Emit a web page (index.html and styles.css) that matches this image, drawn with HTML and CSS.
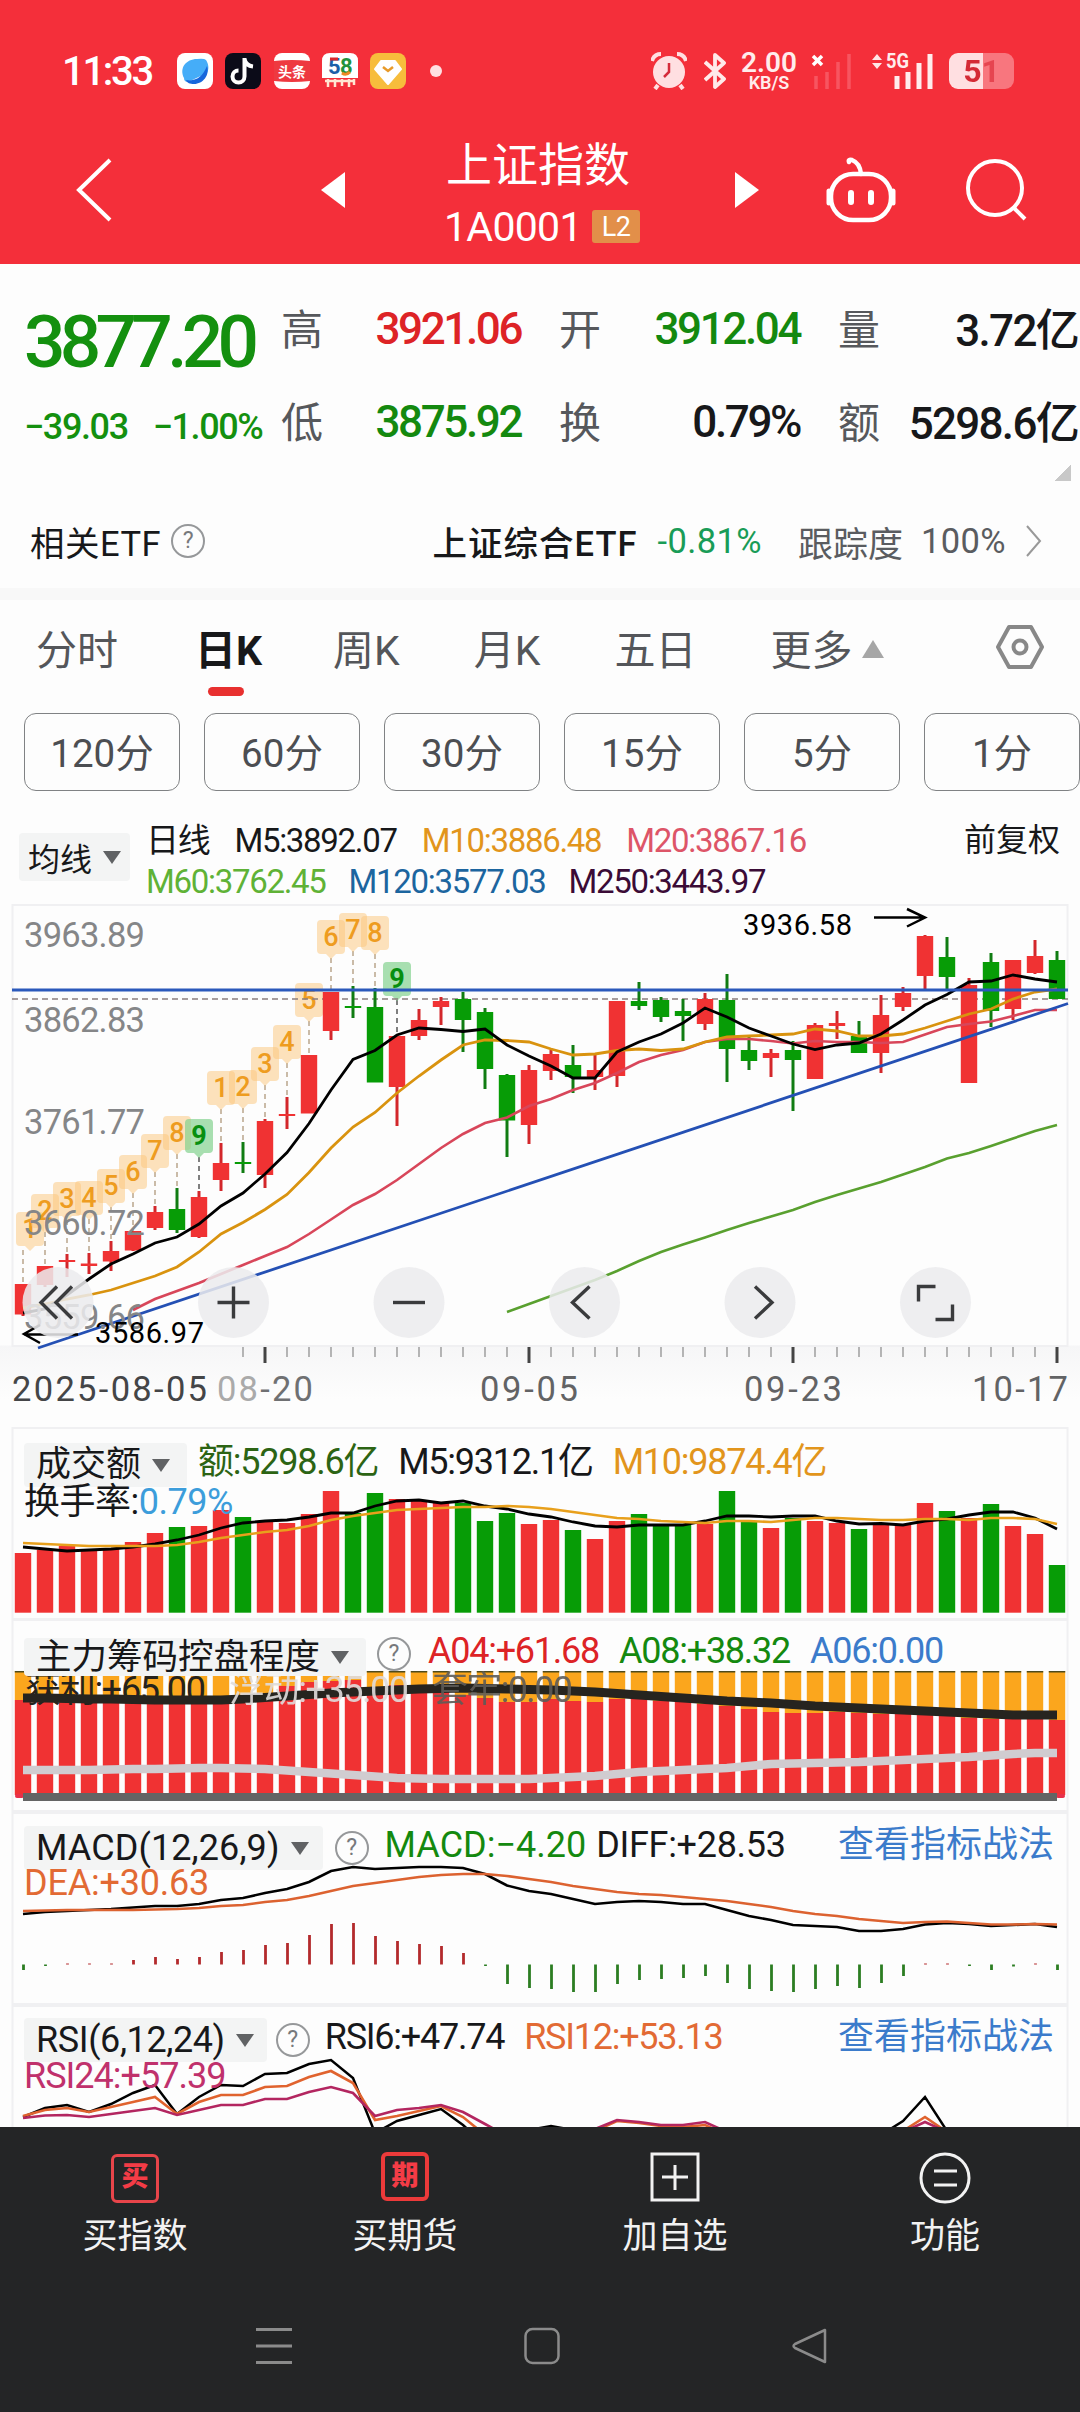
FILE: index.html
```html
<!DOCTYPE html>
<html lang="zh-CN">
<head>
  <meta charset="UTF-8">
  <meta name="viewport" content="width=device-width, initial-scale=1.0">
  <title>上证指数</title>
  <link rel="stylesheet" href="styles.css">
</head>
<body>
  <header>
    <div class="status">
      <span class="time">11:33</span>
      <div class="apps">
        <svg width="36" height="36" viewBox="0 0 36 36"><rect width="36" height="36" rx="8" fill="#fff"/><path d="M7 25C2 15 9 6 20 6q7-1 9 1c3 5 3 9 1 13L11 29q-4 0-4-4z" fill="#45adf8"/><path d="M30 13c3 9-4 18-13 18-4 0-7-1-8-4 10 2 17-4 21-14z" fill="#1766dc"/></svg>
        <svg width="36" height="36" viewBox="0 0 36 36"><rect width="36" height="36" rx="8" fill="#0b0b18"/><path d="M19.500 5v18.500a6 6 0 1 1-6-6M19.500 6c1 5 4 7 8.500 7.500" fill="none" stroke="#fff" stroke-width="4"/></svg>
        <svg width="36" height="36" viewBox="0 0 36 36"><rect width="36" height="36" rx="8" fill="#fff"/><path d="M0 8q18-2 36 0v20q-18 2-36 0z" fill="#ee3940"/><text x="18" y="24" text-anchor="middle" font-size="14" font-weight="700" fill="#fff">头条</text></svg>
        <svg width="36" height="36" viewBox="0 0 36 36"><path d="M8 0h20q8 0 8 8v17H0V8q0-8 8-8z" fill="#fff"/><text x="6" y="21" font-size="22" font-weight="700" fill="#1c5fa8">5</text><text x="18" y="21" font-size="22" font-weight="700" fill="#22923c">8</text><path d="M8 6h8" stroke="#d8282c" stroke-width="3"/><path d="M20 20q4 3 8-1" stroke="#ee8a22" stroke-width="3" fill="none"/><path d="M3 28h29M6 26v8M13 26v8M20 26v7M27 26v8M32 26v6" stroke="#ffe6d2" stroke-width="2.500"/></svg>
        <svg width="36" height="36" viewBox="0 0 36 36"><rect width="36" height="36" rx="8" fill="#f7bd3c"/><path d="M11 8h14l6 8-13 15L5 16z" fill="#fff" stroke="#fff" stroke-linejoin="round" stroke-width="2"/><path d="M13 14l5 4 5-4" fill="none" stroke="#e89a2a" stroke-width="2.500"/></svg>
      </div>
      <i class="dot"></i>
      <div class="sys">
        <svg width="36" height="38" viewBox="0 0 36 38"><circle cx="18" cy="20" r="16" fill="#ffdfe1"/><path d="M1 9Q3 2 10 2M35 9Q33 2 26 2M7 33l-3 4M29 33l3 4" stroke="#ffdfe1" stroke-width="4" fill="none"/><path d="M18 11v9l-5 5" stroke="#d52b3a" stroke-width="2.500" fill="none"/></svg>
        <svg class="bt" width="22" height="38" viewBox="0 0 22 38"><path d="M1 10l19 17-9 8V3l9 8L1 28" stroke="#ffeaea" stroke-width="3.800" fill="none" stroke-linejoin="round"/></svg>
        <div class="speed"><b>2.00</b><span>KB/S</span></div>
        <svg class="sig" width="42" height="38" viewBox="0 0 42 38"><path d="M2 4l9 9M11 4l-9 9" stroke="#fff" stroke-width="3.500"/><path d="M5 24v13M16 20v17M27 10v27M38 2v35" stroke="#f75560" stroke-width="3.500"/></svg>
        <svg class="sig5" width="62" height="38" viewBox="0 0 62 38"><path d="M0 8l5-6 5 6zM0 11l5 6 5-6z" fill="#ffe6e6"/><text x="14" y="16" font-size="20" font-weight="700" textLength="23" lengthAdjust="spacingAndGlyphs" fill="#ffecec">5G</text><path d="M25 24v13M36 20v17M47 11v26M58 2v35" stroke="#ffecec" stroke-width="5"/></svg>
        <div class="battery"><span>51</span></div>
      </div>
    </div>
    <div class="titlebar">
      <svg class="back" width="36" height="64" viewBox="0 0 36 64"><path d="M34 2L3 32l31 30" fill="none" stroke="#fff" stroke-width="4"/></svg>
      <svg class="prev" width="24" height="36" viewBox="0 0 24 36"><path d="M24 0v36L0 18z" fill="#fff"/></svg>
      <div class="title">
        <h1>上证指数</h1>
        <div class="code">1A0001 <span>L2</span></div>
      </div>
      <svg class="next" width="24" height="36" viewBox="0 0 24 36"><path d="M0 0v36l24-18z" fill="#fff"/></svg>
      <svg class="robot" width="70" height="66" viewBox="0 0 70 66"><path d="M23 5q-1-3 3-2q8 3 9 14" fill="none" stroke="#fff" stroke-width="4.500" stroke-linecap="round"/><rect x="5" y="17" width="60" height="46" rx="22" fill="none" stroke="#fff" stroke-width="4.500"/><path d="M3 34v12M67 34v12" stroke="#fff" stroke-width="5" stroke-linecap="round"/><path d="M25 36v9M45 36v9" stroke="#fff" stroke-width="6" stroke-linecap="round"/></svg>
      <svg class="search" width="62" height="62" viewBox="0 0 62 62"><circle cx="29" cy="29" r="27" fill="none" stroke="#fff" stroke-width="4"/><path d="M48 49l11 11" stroke="#fff" stroke-width="4"/></svg>
    </div>
  </header>

  <section class="quote">
    <div class="price">
      <strong>3877.20</strong>
      <div><span>−39.03</span><span>−1.00%</span></div>
    </div>
    <div class="stats">
      <label>高</label><b class="red">3921.06</b>
      <label>开</label><b class="green">3912.04</b>
      <label>量</label><b class="amount">3.72亿</b>
      <label>低</label><b class="green">3875.92</b>
      <label>换</label><b>0.79%</b>
      <label>额</label><b class="amount">5298.6亿</b>
    </div>
    <i class="corner"></i>
  </section>

  <section class="etf">
    <span class="related">相关ETF</span><i class="help">?</i>
    <b>上证综合ETF</b><em>-0.81%</em><span class="track">跟踪度</span><span class="pct">100%</span>
    <svg width="17" height="32" viewBox="0 0 17 32"><path d="M2 1l13 15L2 31" fill="none" stroke="#999" stroke-width="2"/></svg>
  </section>

  <nav class="tabs">
    <a>分时</a><a class="active">日K</a><a>周K</a><a>月K</a><a>五日</a><a>更多<i></i></a>
    <svg width="50" height="46" viewBox="0 0 50 46"><path d="M14 3h22l11 20-11 20H14L3 23z" fill="none" stroke="#888" stroke-width="4" stroke-linejoin="round"/><circle cx="25" cy="23" r="6.500" fill="none" stroke="#888" stroke-width="4"/></svg>
  </nav>
  <div class="pills">
    <a>120分</a><a>60分</a><a>30分</a><a>15分</a><a>5分</a><a>1分</a>
  </div>

  <section class="ma">
    <span class="picker">均线<i class="down"></i></span>
    <div class="ma-lines">
      <div><span>日线</span><span>M5:3892.07</span><span class="orange">M10:3886.48</span><span class="pink">M20:3867.16</span></div>
      <div><span class="lime">M60:3762.45</span><span class="blue">M120:3577.03</span><span class="plum">M250:3443.97</span></div>
    </div>
    <span class="adjust">前复权</span>
  </section>

  <section class="kline">
    <svg id="kline" width="1080" height="520" viewBox="0 0 1080 520"></svg>
  </section>

  <section class="panel volume">
    <svg id="volume" width="1080" height="192" viewBox="0 7 1080 192"></svg>
    <div class="legend">
      <span class="picker">成交额<i class="down"></i></span>
      <span class="dgreen">额:5298.6亿</span><span>M5:9312.1亿</span><span class="orange">M10:9874.4亿</span>
    </div>
    <div class="sub">换手率:<span class="sky">0.79%</span></div>
  </section>

  <section class="panel chips">
    <svg id="chips" width="1080" height="193" viewBox="0 199 1080 193"></svg>
    <div class="legend">
      <span class="picker">主力筹码控盘程度<i class="down"></i></span><i class="help">?</i>
      <span class="red">A04:+61.68</span><span class="green">A08:+38.32</span><span class="link">A06:0.00</span>
    </div>
  </section>

  <section class="panel macd">
    <svg id="macd" width="1080" height="193" viewBox="0 12 1080 193"></svg>
    <div class="legend">
      <span class="picker">MACD(12,26,9)<i class="down"></i></span><i class="help">?</i>
      <span class="green">MACD:−4.20</span><span class="diff">DIFF:+28.53</span><a class="link">查看指标战法</a>
    </div>
    <div class="sub coral">DEA:+30.63</div>
  </section>

  <section class="panel rsi">
    <svg id="rsi" width="1080" height="122" viewBox="0 205 1080 122"></svg>
    <div class="legend">
      <span class="picker">RSI(6,12,24)<i class="down"></i></span><i class="help">?</i>
      <span>RSI6:+47.74</span><span class="coral">RSI12:+53.13</span><a class="link">查看指标战法</a>
    </div>
    <div class="sub magenta">RSI24:+57.39</div>
  </section>

  <footer>
    <div class="actions">
      <a><i class="box">买</i>买指数</a>
      <a><i class="box thick">期</i>买期货</a>
      <a><svg width="50" height="50" viewBox="0 0 50 50"><path d="M2 2h46v46H2zM25 13v25M12 25h26" fill="none" stroke="#f2f2f2" stroke-width="3"/></svg>加自选</a>
      <a><svg width="52" height="52" viewBox="0 0 52 52"><circle cx="26" cy="26" r="24" fill="none" stroke="#f2f2f2" stroke-width="3"/><path d="M15 19h23M15 33h23" stroke="#f2f2f2" stroke-width="3"/></svg>功能</a>
    </div>
    <div class="sysnav">
      <svg width="36" height="38" viewBox="0 0 36 38"><path d="M0 2.500h36M0 19h36M0 35.500h36" stroke="#8b8b8b" stroke-width="3"/></svg>
      <svg width="36" height="38" viewBox="0 0 36 38"><rect x="1.500" y="2" width="33" height="34" rx="7" fill="none" stroke="#8b8b8b" stroke-width="2.500"/></svg>
      <svg width="36" height="38" viewBox="0 0 36 38"><path d="M33 3v32L3 21q-3-2 0-4z" fill="none" stroke="#8b8b8b" stroke-width="2.500" stroke-linejoin="round"/></svg>
    </div>
  </footer>
  <script src="chart.js"></script>
</body>
</html>
```
FILE: styles.css
```css
* {
  box-sizing: border-box;
}

body {
  margin: 0;
  width: 1080px;
  height: 2412px;
  overflow: hidden;
  background: #fdfdfd;
  color: #17181a;
  font-family: Roboto, "Noto Sans CJK SC", sans-serif;
}

svg {
  display: block;
  flex: none;
}

i, em {
  font-style: normal;
}

.red { color: #dd2326; }
.green { color: #14890f; }
.dgreen { color: #2c6414; }
.orange { color: #e2951c; }
.pink { color: #dd5568; }
.lime { color: #5fb236; }
.blue { color: #1c659f; }
.plum { color: #3b0b36; }
.sky { color: #3c9ddb; }
.coral { color: #e26a34; }
.magenta { color: #c0316c; }
.link { color: #3b7bcb; }

/* red header */
header {
  height: 264px;
  background: #f42f3a;
  color: #fff;
}

.status {
  display: flex;
  align-items: center;
  height: 142px;
  padding: 0 66px 0 62px;
}

.time {
  width: 115px;
  font-size: 40px;
  font-weight: 500;
  letter-spacing: -2.300px;
}

.apps {
  display: flex;
  gap: 12.300px;
}

.dot {
  width: 12px;
  height: 12px;
  margin-left: 24px;
  border-radius: 50%;
  background: #ffdfe1;
}

.sys {
  display: flex;
  align-items: center;
  margin-left: auto;
}

.bt { margin-left: 17px; }
.sig { margin-left: 12px; }
.sig5 { margin-left: 19px; }

.speed {
  width: 60px;
  margin-left: 13px;
  text-align: center;
  color: #ffecec;
  white-space: nowrap;
}

.speed b {
  display: block;
  font-size: 28px;
  line-height: 23px;
  font-weight: 600;
}

.speed span {
  display: block;
  font-size: 18px;
  line-height: 17px;
  font-weight: 600;
}

.battery {
  width: 65px;
  height: 36px;
  margin-left: 15px;
  border-radius: 9px;
  background: linear-gradient(90deg, #ffdfe1 53%, #f8767e 53%);
  text-align: center;
  font-size: 32px;
  line-height: 37px;
  font-weight: 700;
}

.battery span {
  background: linear-gradient(90deg, #d42a35 50%, #e64550 50%);
  -webkit-background-clip: text;
  color: transparent;
}

.titlebar {
  display: flex;
  align-items: center;
  height: 96px;
}

.back { margin-left: 76px; }
.prev { margin-left: 209px; }
.next { margin-left: 95px; }
.robot { margin-left: 67px; }
.search { margin-left: 70px; }

.title {
  width: 196px;
  margin-left: 99px;
}

.title h1 {
  margin: 8px 0 0 2px;
  font-size: 46px;
  line-height: 56px;
  font-weight: 400;
  white-space: nowrap;
}

.code {
  display: flex;
  align-items: center;
  justify-content: space-between;
  font-size: 41px;
  line-height: 50px;
  letter-spacing: -0.7px;
  margin-top: 9px;
}

.code span {
  width: 48px;
  height: 33px;
  border-radius: 3px;
  background: #e28f49;
  text-align: center;
  font-size: 27px;
  line-height: 34px;
}

/* quote */
.quote {
  position: relative;
  display: flex;
  height: 232px;
  white-space: nowrap;
}

.price {
  width: 281px;
  padding: 38px 0 0 24px;
  color: #14900f;
}

.price strong {
  display: block;
  font-size: 73px;
  line-height: 80px;
  font-weight: 500;
  letter-spacing: -5.700px;
}

.price div {
  display: flex;
  gap: 25px;
  margin-top: 22px;
  font-size: 36px;
  line-height: 46px;
  font-weight: 500;
  letter-spacing: -1.400px;
}

.stats {
  display: grid;
  grid-template-columns: 80px 160px 119px 160px 78px 200px;
  grid-auto-rows: 93px;
  align-items: center;
  height: 186px;
  margin-top: 18px;
  font-size: 44px;
}

.stats label {
  padding-bottom: 5px;
  font-size: 42px;
  color: #56585c;
}

.stats b {
  font-weight: 500;
  letter-spacing: -2.400px;
  text-align: right;
}

.stats .amount {
  padding-bottom: 3px;
  letter-spacing: -1.700px;
}

.stats label:nth-of-type(3n+2),
.stats label:nth-of-type(3n) {
  padding-left: 38px;
}

.corner {
  position: absolute;
  right: 9px;
  top: 200px;
  width: 16px;
  height: 17px;
  background: linear-gradient(135deg, transparent 50%, #c8c8c8 50%);
}

/* etf row */
.etf {
  display: flex;
  align-items: center;
  height: 104px;
  padding: 0 38px 2px 30px;
  border-bottom: 12px solid #f8f8f8;
  font-size: 34.500px;
  white-space: nowrap;
}

.help {
  display: inline-block;
  flex: none;
  width: 34px;
  height: 34px;
  border: 2px solid #96989a;
  border-radius: 50%;
  color: #77797c;
  font-size: 23px;
  line-height: 30px;
  text-align: center;
  letter-spacing: 0;
}

.related { letter-spacing: 0.5px; }

.etf .help { margin-left: 10px; }

.etf b {
  margin-left: auto;
  font-weight: 500;
  letter-spacing: 1px;
}

.etf em {
  margin-left: 20px;
  color: #199c57;
  letter-spacing: 0.4px;
}

.etf .track {
  margin-left: 36px;
  color: #5a5c60;
  font-size: 35px;
}

.etf .pct {
  margin-left: 18px;
  color: #5a5c60;
  letter-spacing: 0.4px;
}

.etf svg { margin-left: 19px; }

/* period tabs */
.tabs {
  display: flex;
  align-items: center;
  height: 98px;
  padding: 0 35px 5px 36px;
  font-size: 41px;
  color: #54565a;
}

.tabs a {
  position: relative;
  margin-right: 74px;
  white-space: nowrap;
}

.tabs a.active {
  margin: 0 71px 0 3px;
  color: #17181a;
  font-weight: 700;
}

.tabs a.active::after {
  content: "";
  position: absolute;
  left: 13px;
  bottom: -19px;
  width: 36px;
  height: 9px;
  border-radius: 5px;
  background: #e8302f;
}

.tabs i {
  display: inline-block;
  margin: 0 0 7px 9px;
  border: 11px solid transparent;
  border-top: 0;
  border-bottom: 18px solid #a6a6a6;
}

.tabs svg { margin-left: auto; }
.tabs a:nth-child(6) { margin-right: 0; }

.pills {
  display: flex;
  gap: 24px;
  height: 78px;
  margin-top: 15px;
  padding-left: 24px;
}

.pills a {
  flex: none;
  width: 156px;
  border: 1.500px solid #808284;
  border-radius: 12px;
  text-align: center;
  font-size: 38.500px;
  line-height: 79px;
  color: #4c4e52;
}

/* moving averages legend */
.ma {
  display: flex;
  height: 109px;
  padding: 29px 20px 0 19px;
  font-size: 33px;
  white-space: nowrap;
}

.picker {
  display: flex;
  align-items: center;
  justify-content: center;
  background: #f3f4f4;
  border-radius: 4px;
  white-space: nowrap;
}

.ma .picker {
  width: 111px;
  height: 48px;
  margin-top: 13px;
  font-size: 32px;
}

.down {
  margin-left: 11px;
  border: 9px solid transparent;
  border-bottom: 0;
  border-top: 13px solid #606264;
}

.ma-lines {
  margin-left: 16px;
  line-height: 41px;
  letter-spacing: -1.300px;
}

.ma-lines div {
  display: flex;
  gap: 25px;
}

.ma-lines div + div { gap: 23px; }

.adjust {
  margin-left: auto;
  font-size: 32px;
  line-height: 41px;
}

.kline {
  height: 527px;
}

.kline svg {
  background: linear-gradient(#fdfdfd 445px, #f6f6f7 446px, #fdfdfd 500px);
}

/* indicator panels */
.panel {
  position: relative;
  height: 193px;
  padding: 10px 26px 0 24px;
  overflow: hidden;
}

.panel.volume {
  height: 192px;
  padding-top: 12px;
}

.panel.rsi {
  height: 122px;
  padding-top: 9px;
}

.panel > svg {
  position: absolute;
  left: 0;
  top: 0;
}

.legend {
  position: relative;
  display: flex;
  gap: 20px;
  height: 46px;
  font-size: 36px;
  line-height: 46px;
  letter-spacing: -1.250px;
  white-space: nowrap;
}

.legend .picker {
  height: 44px;
  margin-top: 4px;
  padding: 0 17px 0 12px;
  letter-spacing: 0;
}

.volume .picker {
  margin-right: -9px;
  font-size: 35px;
}

.legend .help { margin-top: 9px; }

.chips .legend { margin-top: -1px; }

.chips .picker {
  height: 38px;
  margin-top: 10px;
  margin-right: -9px;
  font-size: 35.500px;
}

.chips .help { margin-right: -3px; }

.macd .picker {
  padding-right: 14px;
  margin-right: -8px;
  letter-spacing: 0.1px;
}

.macd .legend { letter-spacing: 0; }
.macd .legend .diff {
  margin-left: -10px;
  letter-spacing: -0.3px;
}

.macd .help, .rsi .help { margin-right: -4px; }

.rsi .picker {
  padding-right: 13px;
  margin-right: -11px;
  letter-spacing: -0.4px;
}

.rsi .help { margin-right: -5px; }

.legend a {
  margin-left: auto;
  font-size: 36px;
  letter-spacing: 0;
}

.sub {
  position: relative;
  margin: -6px 0 0;
  font-size: 36px;
  line-height: 46px;
  letter-spacing: -0.5px;
}

.macd .sub { margin-top: -8px; letter-spacing: -0.2px; }
.rsi .sub { margin-top: -7px; letter-spacing: -1px; }

/* bottom bars */
footer {
  position: relative;
  height: 285px;
  background: #242526;
  color: #f2f2f2;
}

.actions {
  display: flex;
  height: 135px;
}

.actions a {
  display: flex;
  flex-direction: column;
  align-items: center;
  justify-content: space-between;
  width: 270px;
  padding: 25px 0 0;
  font-size: 35px;
  line-height: 50px;
}

.box {
  width: 48px;
  height: 49px;
  margin-top: 2px;
  border: 3px solid #e8454a;
  border-radius: 6px;
  color: #f43c46;
  font-size: 27px;
  font-weight: 900;
  line-height: 41px;
  text-align: center;
}

.box.thick {
  margin-top: 0;
  border-width: 4px;
  border-color: #ec3a3a;
}

.sysnav {
  display: flex;
  gap: 232px;
  padding: 65px 0 0 256px;
}
```
FILE: chart.js
```js
const RED = '#f03233';
const GREEN = '#079c06';
const X = i => 23 + i * 22;

// body top, body bottom, high, low, up(1)/down(0)
const candles = [
  [384,414.5,384,416,1],[366,385,366,387,1],[360,362,354,377,1],[363.5,366,353,374,1],
  [351,361.5,341,371,1],[331,350.5,331,351,1],[312,328,306,330,1],[309,330,288,333,0],
  [297,337,291,338,1],[263,280,243,291,1],[262,264,242,273,0],[221,275,219,288,1],
  [214,216,197,229,1],[155,213.5,155,213,1],[92,131,92,140,1],[106,108,86,118,0],
  [107,182.5,88,182,0],[136,187,136,226,1],[120,136,109,140,1],[101,107,97,125,1],
  [99,120,92,152,0],[112,169,108,189,0],[175,220.5,174,257,0],[170,225,165,244,1],
  [154,171,150,180,1],[165,177,145,193,0],[170,177,155,190,1],[101,176,101,187,1],
  [101,106,82,110,0],[100,117,97,122,0],[111,116,99,141,0],[99,124,93,130,1],
  [100,149,74,182,0],[150,161,136,170,0],[153,158,149,177,1],[150,160,141,211,0],
  [125,179,123,179,1],[123,126,111,139,1],[136,153,121,153,0],[115,153,95,173,1],
  [93,107,87,111,1],[36,76,35,90,1],[57,77,37,90,0],[85,183,78,183,1],
  [62,111,53,127,0],[60,109,60,120,1],[56,73,40,74,1],[60,99,51,99,0]
];

const ma5 = [413,409,395,379,364,354,343,337,324,306,293,274,252.5,223.5,190,159.5,150.5,135,128,129.5,131.5,129,145,156,166,178,178,152,142,134,123,108,117,128,136,144,149.5,145,143,134,120,105,94.5,82,81,75,79,82];
const ma10 = [408,404,399,395,390,383,376,367,352,334,322.5,309.5,294.5,272.5,248,227,212.5,193,176,160,145,140,140.5,142,149,155,154,150.5,149,150.5,149,142,137,136,135,134,129,131,136,136,134,128,121,114,109,99,92,89];
const ma20 = [410,399,391,383,374,365,356,347,334,319.5,305,294,280,264,248,234,223,217.5,206,199,190,183,173,162,155,150,142,139,139,141,143.5,141,142,142,143,142,134.5,127,124,121.5,116,110,110];
const ma60 = [412,404,396,388,380,371,361,352,344.5,337.5,330,323,316.5,310,302,295,288.5,282,274.5,267,258.5,253,246,238.5,231,225];

// sequence markers: bar index, number, top y
const marks = [
  [0,1,312],[1,2,294],[2,3,282],[3,4,281],[4,5,269],[5,6,255],[6,7,234],[7,8,216],[8,9,219],
  [9,1,171],[10,2,170],[11,3,147],[12,4,125],[13,5,83],[14,6,20],[15,7,13],[16,8,16],[17,9,62]
];

const vol = [133,130,126,130,128,122,113,107,106,90,97,102,103,94,71,93,73,79,80,83,83,101,93,104,100,110,119,101,94,106,105,104,71,102,108,98,101,103,109,105,105,83,91,98,84,106,114,145];
const vol5 = [127,129,131,130,129,127,124,120,115,108,103,101,100,97,93,93,86,81,80,83,81,86,89,94,97,102,106,107,105,105,105,101,96,96,97,96,96,101,104,103.5,105,101,99,95,92,92,98,109];
const vol10 = [123,124,125,126,126,126,126,125,122,118,115,112,110,106,100,96,93,90,89,88,87,87,86,87,89,92,95,98,99,101,102,103,101,101,102,100,98,98,99,100,100,99,99,100,98,98,99,104];

const split = [280,281,281,281,281,281,281,281,281,280,275,273,266,262,261,260,268,265,270,270,275,278,282,282,279,281,282,279,279,281,282,284,286,289,292,293,293,292,293,294,294,294,295,298,299,299,299,300];
const cost = [278,278,278.5,279,279,279.5,280,280,280,280,279,277.5,276,274.5,273,272,271,270,269,268.5,268,268.5,269,269.5,270,271,272,273.5,275,276.5,278,279.5,281,282,283,284.5,286,287,288,289,290,291,292,293,294,295,295,295];
const floatLine = [350,350,350,350,349.5,349,349,348.5,348,348,348.5,349,350.5,352,353.5,355,356.5,358,358.5,359,359,359,359,359,358,357,356,354,352,351,350,349,348,346,344,343.5,343,342.5,342,341,340,339,338,337,335.5,334,333,333];

const diff = [114,112,111,110,109,107.5,106,106,104,100,98,93,89,82,71,67,69,68,67,67,68,74,85.5,91,94,99,104,102,101,102,104,104,110,116,120,125,126,127,131,131,129,124.5,123,124,126,125,124,127];
const dea = [111,110.5,110,110,110,110,109.5,109,108,106,105,102,100,96,91,86,83,80,77,75,74,74,76,79,82,86,89,92,94,95,97,99,101,104,107,111,114,116,119,121,123,122,121.5,123,124.5,124.5,124,124.5];
const hist = [170,166,163.5,163.5,163.5,160,157,159,157,152,150,145,143,135,124,123,136,141,144,146,153,166,184,188,189,192,192,184,180,179,178,176,183,189,191,192,189,186,188,183,176,163.5,163.5,166,170,166.5,163.5,170];

const rsi6 = [317,308,305,312,304,293,285,314,297,285,286,274,273,264,260,278,333,321,315,309,325,345,345,330,326,330,345,345,345,345,345,345,345,345,345,345,345,345,345,335,321,297,331,350];
const rsi12 = [316,310,308,312,307,302,297,314,302,295,295,287,286,277,271,283,320,316,311,306,317,335,350,350,350,345,331,321,323,326,327,325,335,350,350,350,350,350,350,345,331,317,332,350];
const rsi24 = [318,315.5,315,317,314,311,308,315,310,305,305,299,299,292,287,293,316,310,308,305,312,324,336,350,350,345,329,320,322,325,325,322,332,350,350,350,350,350,350,345,332,322,332,350];

const rect = (x, y, w, h, fill, extra = '') => `<rect x="${x}" y="${y}" width="${w}" height="${h}" fill="${fill}" ${extra}/>`;
const seg = (x1, y1, x2, y2, color, w = 2, extra = '') => `<path d="M${x1} ${y1}L${x2} ${y2}" stroke="${color}" stroke-width="${w}" ${extra}/>`;
const line = (data, color, w = 2.5, start = 0) =>
  `<polyline points="${data.map((y, i) => X(i + start) + ',' + y).join(' ')}" fill="none" stroke="${color}" stroke-width="${w}"/>`;
const label = (x, y, str, size, color, len, extra = '') =>
  `<text x="${x}" y="${y}" font-size="${size}" fill="${color}" ${len ? `textLength="${len}"` : ''} ${extra}>${str}</text>`;
const frame = (y, h) => `<rect x="12.5" y="${y}" width="1055" height="${h}" fill="none" stroke="#f0f0f2" stroke-width="2"/>`;

function drawKline() {
  let s = frame(5, 441);

  marks.forEach(([i, n, y]) => {
    const x = Math.max(X(i), 30), g = n === 9;
    s += seg(X(i), y + 38, X(i), candles[i][2], g ? '#555' : '#b9a58c', 1.5, 'stroke-dasharray="5 4"');
    s += `<path d="M${x - 10} ${y}h20q4 0 4 4v26q0 4-4 4h-5l-5 5-5-5h-5q-4 0-4-4v-26q0-4 4-4z" fill="${g ? '#83d18e' : '#fbc679'}" fill-opacity="${g ? 0.7 : 0.5}"/>`;
    s += label(x, y + 26, n, 27, g ? '#078f10' : '#ee9c20', 0, `text-anchor="middle" font-weight="${g ? 700 : 500}"`);
  });

  s += seg(12, 99, 1068, 99, '#8a7d7d', 1.5, 'stroke-dasharray="6 4"');
  candles.forEach(([top, bottom, high, low, up], i) => {
    const c = up ? RED : GREEN;
    s += seg(X(i), high, X(i), low, up ? '#d3272b' : '#107c12', 3);
    s += rect(X(i) - 8.2, top, 16.4, bottom - top, c);
  });

  s += line(ma60, '#59a02f', 2.6, 22);
  s += line(ma20, '#d8465a', 2.6, 5);
  s += line(ma10, '#d9930f', 2.8);
  s += line(ma5, '#000', 2.8);
  s += seg(12, 90, 1068, 90, '#2b59bb', 3);
  s += seg(38, 448, 1068, 103.5, '#2450b4', 2.8);

  [['3963.89', 46.5], ['3862.83', 131.5], ['3761.77', 233.5], ['3660.72', 335], ['3559.66', 429]].forEach(([t, y]) => {
    s += label(24, y, t, 34.5, '#858688', 121);
  });
  s += label(95, 443, '3586.97', 29, '#000', 109);
  s += `<path d="M78 434.500H24M40 425L24 434l16 9" fill="none" stroke="#000" stroke-width="2.500"/>`;
  s += label(743, 34.5, '3936.58', 29, '#000', 109);
  s += `<path d="M874 17.500h50M907 9l18 8.500-18 9" fill="none" stroke="#000" stroke-width="2.500"/>`;

  // chart controls
  const icons = [
    'M-1-16l-16 16 16 16M14-16l-16 16 16 16',
    'M-16 0h32M0-16v32',
    'M-16 0h32',
    'M5-16l-17 16 17 16',
    'M-5-16l17 16-17 16',
    'M-17-1v-15h17M17 2v15h-17'
  ];
  icons.forEach((d, i) => {
    s += `<g transform="translate(${58 + i * 175.5} 402.500)"><circle r="35.500" fill="#ebebed" fill-opacity=".86"/><path d="${d}" fill="none" stroke="#3a3b3d" stroke-width="3.400"/></g>`;
  });

  for (let i = 10; i < 48; i++) {
    const major = i % 12 === 11;
    s += seg(X(i), 447, X(i), major ? 463 : 457, major ? '#444' : '#888', major ? 3 : 1.2);
  }
  s += label(12, 501, '2025-08-05', 34.5, '#444547', 195);
  s += label(217, 501, '<tspan fill="#aaa">08</tspan>-20', 34.5, '#6f7072', 96);
  s += label(480, 501, '09-05', 34.5, '#626365', 98);
  s += label(744, 501, '09-23', 34.5, '#626365', 98);
  s += label(972, 501, '10-17', 34.5, '#626365', 96);
  document.getElementById('kline').innerHTML = s;
}

function drawVolume() {
  let s = frame(8, 191);
  vol.forEach((y, i) => {
    s += rect(X(i) - 8.2, y, 16.4, 192.7 - y, candles[i][4] ? RED : GREEN);
  });
  s += line(vol5, '#000', 2.8) + line(vol10, '#e8a01c', 2.6);
  document.getElementById('volume').innerHTML = s;
}

function drawChips() {
  let s = frame(200, 191);
  split.forEach((y, i) => {
    s += rect(X(i) - 8.2, 251, 16.4, y - 251, '#fba61d');
    s += rect(X(i) - 8.2, y, 16.4, 375 - y, RED);
    s += rect(X(i) - 8.2, 251, 16.4, 1.5, '#4d4a1c');
  });
  s += rect(15, 374, 9, 4, '#e8304a', 'rx="2"') + rect(1056, 374, 9, 4, '#e8304a', 'rx="2"');
  s += label(25, 282, '获利:+65.00', 36, '#26221c', 181);
  s += line(cost, '#26241f', 9);
  s += label(229, 282, '浮动:+35.00', 36, '#e0dcdc', 180, 'opacity=".9"');
  s += label(432, 282, '套牢:0.00', 36, '#5e5c58', 141, 'opacity=".9"');
  s += line(floatLine, '#d0ccd0', 8.5);
  s += seg(23, 377, 1057, 377, '#646464', 8);
  document.getElementById('chips').innerHTML = s;
}

function drawMacd() {
  let s = frame(13, 191);
  s += line(diff, '#000', 2.6) + line(dea, '#dc6230', 2.6);
  hist.forEach((y, i) => {
    const up = y < 164.5;
    s += seg(X(i) + 0.5, 164.5, X(i) + 0.5, y, up ? '#b32a2c' : '#2c7d22', 2.8);
  });
  document.getElementById('macd').innerHTML = s;
}

function drawRsi() {
  let s = frame(206, 180);
  s += line(rsi6, '#000', 2.5) + line(rsi12, '#e0632e', 2.6) + line(rsi24, '#b32660', 2.6);
  document.getElementById('rsi').innerHTML = s;
}

drawKline();
drawVolume();
drawChips();
drawMacd();
drawRsi();
```
